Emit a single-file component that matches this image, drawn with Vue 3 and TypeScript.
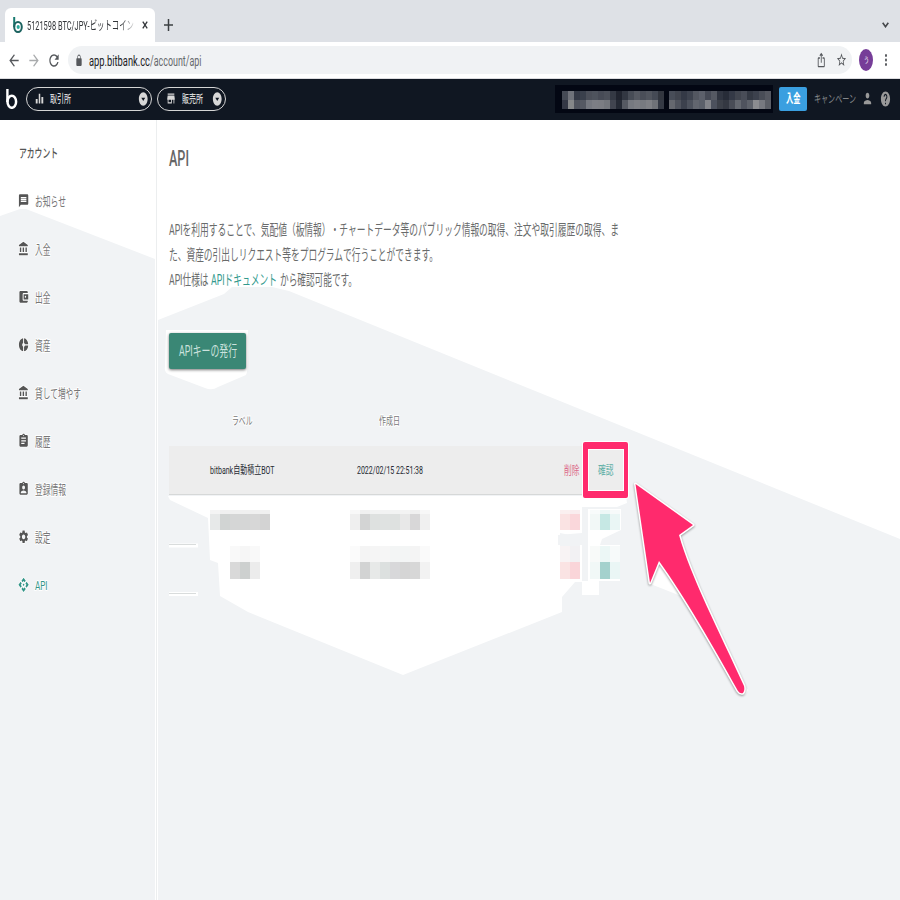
<script setup lang="ts">
import { h, type FunctionalComponent } from 'vue'

// Text squeezed horizontally to an exact width; vertically centred in its box.
const SQUEEZE = 0.62
const Fit: FunctionalComponent<{ t: string; w: number; s: number }> = (p) =>
  h('svg', { class: 'fit', width: p.w, height: p.s * 1.2 }, [
    h('text', { x: 0, y: p.s * 0.98, 'font-size': p.s, transform: `scale(${SQUEEZE} 1)`, textLength: p.w / SQUEEZE, lengthAdjust: 'spacingAndGlyphs' }, p.t),
  ])
Fit.props = ['t', 'w', 's']

// 24-unit glyph drawn narrower than it is tall.
const Ic: FunctionalComponent<{ d: string; w?: number; h?: number }> = (p) =>
  h('svg', { class: 'ic', width: p.w ?? 11.2, height: p.h ?? 15.6, viewBox: '0 0 24 24', preserveAspectRatio: 'none' }, [
    h('path', { d: p.d }),
  ])
Ic.props = ['d', 'w', 'h']

interface Cell { x: number; y: number; w: number; h: number; c: string }
const Mosaic: FunctionalComponent<{ cells: Cell[]; w: number; h: number }> = (p) =>
  h('svg', { class: 'ic', width: p.w, height: p.h, 'shape-rendering': 'crispEdges' },
    p.cells.map((c) => h('rect', { x: c.x, y: c.y, width: c.w, height: c.h, fill: c.c })))
Mosaic.props = ['cells', 'w', 'h']

const strip = (colors: string[], y: number, height: number, x = 0, w = 10): Cell[] =>
  colors.map((c, i) => ({ x: x + i * w, y, w, h: height, c }))

const bank = 'M4 10v7h3v-7H4zm6 0v7h3v-7h-3zM2 22h19v-3H2v3zm14-12v7h3v-7h-3zm-4.5-9L2 6v2h19V6l-9.5-5z'
const board = 'M19 3h-4.18C14.4 1.84 13.3 1 12 1c-1.3 0-2.4.84-2.82 2H5c-1.1 0-2 .9-2 2v14c0 1.1.9 2 2 2h14c1.1 0 2-.9 2-2V5c0-1.1-.9-2-2-2zm-7 0c.55 0 1 .45 1 1s-.45 1-1 1-1-.45-1-1 .45-1 1-1z'
const back = 'M20 11H7.83l5.59-5.59L12 4l-8 8 8 8 1.41-1.41L7.83 13H20v-2z'
const forward = 'M4 11h12.17l-5.59-5.59L12 4l8 8-8 8-1.41-1.41L16.17 13H4v-2z'
const reload = 'M17.65 6.35C16.2 4.9 14.21 4 12 4c-4.42 0-7.99 3.58-7.99 8s3.57 8 7.99 8c3.73 0 6.84-2.55 7.73-6h-2.08c-.82 2.33-3.04 4-5.65 4-3.31 0-6-2.69-6-6s2.69-6 6-6c1.66 0 3.14.69 4.22 1.78L13 11h7V4l-2.35 2.35z'
const lock = 'M18 8h-1V6c0-2.76-2.24-5-5-5S7 3.24 7 6v2H6c-1.1 0-2 .9-2 2v10c0 1.1.9 2 2 2h12c1.1 0 2-.9 2-2V10c0-1.1-.9-2-2-2zm-2.9 0H8.9V6c0-1.71 1.39-3.1 3.1-3.1 1.71 0 3.1 1.39 3.1 3.1v2z'
const share = 'M16 5l-1.42 1.42-1.59-1.59V16h-1.98V4.83L9.42 6.42 8 5l4-4 4 4zm4 5v11c0 1.1-.9 2-2 2H6c-1.11 0-2-.9-2-2V10c0-1.11.89-2 2-2h3v2H6v11h12V10h-3V8h3c1.1 0 2 .89 2 2z'
const star = 'M22 9.24l-7.19-.62L12 2 9.19 8.63 2 9.24l5.46 4.73L5.82 21 12 17.27 18.18 21l-1.63-7.03L22 9.24zM12 15.4l-3.76 2.27 1-4.28-3.32-2.88 4.38-.38L12 6.1l1.71 4.04 4.38.38-3.32 2.88 1 4.28L12 15.4z'
const dots = 'M12 8c1.1 0 2-.9 2-2s-.9-2-2-2-2 .9-2 2 .9 2 2 2zm0 2c-1.1 0-2 .9-2 2s.9 2 2 2 2-.9 2-2-.9-2-2-2zm0 6c-1.1 0-2 .9-2 2s.9 2 2 2 2-.9 2-2-.9-2-2-2z'
const bars = 'M2 13h5v8H2zM10 3h4v18h-4zM17 9h5v12h-5z'
const store = 'M20 4H4v2h16V4zm1 10v-2l-1-5H4l-1 5v2h1v6h10v-6h4v6h2v-6h1zm-9 4H6v-4h6v4z'
const drop = 'M12 2C6.48 2 2 6.48 2 12s4.48 10 10 10 10-4.48 10-10S17.52 2 12 2zm0 13l-4.5-5h9z'
const person = 'M12 12c2.21 0 4-1.79 4-4s-1.79-4-4-4-4 1.79-4 4 1.79 4 4 4zm0 2c-2.67 0-8 1.34-8 4v2h16v-2c0-2.66-5.33-4-8-4z'
const help = 'M12 2C6.48 2 2 6.48 2 12s4.48 10 10 10 10-4.48 10-10S17.52 2 12 2zm1 17h-2v-2h2v2zm2.07-7.75l-.9.92C13.45 12.9 13 13.5 13 15h-2v-.5c0-1.1.45-2.1 1.17-2.83l1.24-1.26c.37-.36.59-.86.59-1.41 0-1.1-.9-2-2-2s-2 .9-2 2H8c0-2.21 1.79-4 4-4s4 1.79 4 4c0 .88-.36 1.68-.93 2.25z'

const nav: { t: string; w: number; d: string; on?: boolean }[] = [
  { t: 'お知らせ', w: 31, d: 'M20 2H4c-1.1 0-1.99.9-1.99 2L2 22l4-4h14c1.1 0 2-.9 2-2V4c0-1.1-.9-2-2-2zm-2 12H6v-2h12v2zm0-3H6V9h12v2zm0-3H6V6h12v2z' },
  { t: '入金', w: 15.5, d: bank },
  { t: '出金', w: 15.5, d: 'M21 18v1c0 1.1-.9 2-2 2H5c-1.11 0-2-.9-2-2V5c0-1.1.89-2 2-2h14c1.1 0 2 .9 2 2v1h-9c-1.11 0-2 .9-2 2v8c0 1.1.89 2 2 2h9zm-9-2h10V8H12v8zm4-2.5c-.83 0-1.5-.67-1.5-1.5s.67-1.5 1.5-1.5 1.5.67 1.5 1.5-.67 1.5-1.5 1.5z' },
  { t: '資産', w: 15.5, d: 'M11 9.16V2c-5 .5-9 4.79-9 10s4 9.5 9 10v-7.16c-1-.41-2-1.52-2-2.84s1-2.43 2-2.84zM14.86 11H22c-.48-4.75-4-8.53-9-9v7.16c1 .3 1.52.98 1.86 1.84zM13 14.84V22c5-.47 8.52-4.25 9-9h-7.14c-.34.86-.86 1.54-1.86 1.84z' },
  { t: '貸して増やす', w: 46, d: bank },
  { t: '履歴', w: 15.5, d: board + 'm2 14H7v-2h7v2zm3-4H7v-2h10v2zm0-4H7V7h10v2z' },
  { t: '登録情報', w: 31, d: board + 'm0 4c1.66 0 3 1.34 3 3s-1.34 3-3 3-3-1.34-3-3 1.34-3 3-3zm6 12H6v-1.4c0-2 4-3.1 6-3.1s6 1.1 6 3.1V19z' },
  { t: '設定', w: 15.5, d: 'M19.14 12.94c.04-.3.06-.61.06-.94 0-.32-.02-.64-.07-.94l2.03-1.58c.18-.14.23-.41.12-.61l-1.92-3.32c-.12-.22-.37-.29-.59-.22l-2.39.96c-.5-.38-1.03-.7-1.62-.94l-.36-2.54c-.04-.24-.24-.41-.48-.41h-3.84c-.24 0-.43.17-.47.41l-.36 2.54c-.59.24-1.13.57-1.62.94l-2.39-.96c-.22-.08-.47 0-.59.22L2.74 8.87c-.12.21-.08.47.12.61l2.03 1.58c-.05.3-.09.63-.09.94s.02.64.07.94l-2.03 1.58c-.18.14-.23.41-.12.61l1.92 3.32c.12.22.37.29.59.22l2.39-.96c.5.38 1.03.7 1.62.94l.36 2.54c.05.24.24.41.48.41h3.84c.24 0 .44-.17.47-.41l.36-2.54c.59-.24 1.13-.56 1.62-.94l2.39.96c.22.08.47 0 .59-.22l1.92-3.32c.12-.22.07-.47-.12-.61l-2.01-1.58zM12 15.6c-1.98 0-3.6-1.62-3.6-3.6s1.62-3.6 3.6-3.6 3.6 1.62 3.6 3.6-1.62 3.6-3.6 3.6z' },
  { t: 'API', w: 12.5, on: true, d: 'M14 12l-2 2-2-2 2-2 2 2zm-2-6l2.12 2.12 2.5-2.5L12 1 7.38 5.62l2.5 2.5L12 6zm-6 6l2.12-2.12-2.5-2.5L1 12l4.62 4.62 2.5-2.5L6 12zm12 0l-2.12 2.12 2.5 2.5L23 12l-4.62-4.62-2.5 2.5L18 12zm-6 6l-2.12-2.12-2.5 2.5L12 23l4.62-4.62-2.5-2.5L12 18z' },
]

const balance: Cell[] = [
  ...strip(['#454a55', '#6f727a', '#343946', '#3a404c', '#4b4f59', '#4e535d', '#474b56', '#4c505a', '#343944', '#20242f', '#323742', '#474c56', '#555962', '#4a4e58', '#51555e', '#454a55', '#32363f'], 6, 10, 7, 6),
  ...strip(['#343845', '#858789', '#50545e', '#555963', '#757880', '#7c7e85', '#7b7d83', '#74777d', '#414550', '#252a35', '#555962', '#767980', '#7c7e84', '#777a80', '#7e8085', '#6f7278', '#343944'], 15, 9, 7, 6),
  ...strip(['#484d58', '#41454f', '#343946', '#3e434f', '#535761', '#5c606b', '#464a56', '#555963', '#303541', '#272c38', '#343946', '#41454f', '#494d58', '#343944', '#3c414d', '#494d57', '#555861'], 6, 10, 114, 6),
  ...strip(['#65686f', '#4f535d', '#3c414d', '#4d525d', '#62666f', '#5b606a', '#82848a', '#4c515d', '#3c4049', '#343842', '#494d57', '#646870', '#4f535e', '#5e626b', '#8b8c90', '#777980', '#5c5f67'], 15, 9, 114, 6),
]
const label1: Cell[] = [...strip(['#f4f4f4', '#f0f0f0', '#f0f0f0', '#f0f0f0', '#f0f0f0', '#f0f0f0'], 0, 4), ...strip(['#e7e9e9', '#d1d4d3', '#d5d6d6', '#d5d6d6', '#d7d7d7', '#d3d3d3'], 4, 16)]
const date1: Cell[] = [...strip(['#f8f8f8', '#f0f0f0', '#f2f3f3', '#f2f3f3', '#f2f3f3', '#f3f3f3', '#f0f0f0', '#f7f7f7'], 0, 4), ...strip(['#efefef', '#d3d4d4', '#dee1e0', '#dfe2e1', '#dee1e0', '#e8e8e8', '#d8d7d8', '#f0f0f0'], 4, 16)]
const label2: Cell[] = [...strip(['#f9f9f9', '#f6f6f6', '#f9f9f9'], 0, 16), ...strip(['#d9d9d9', '#cdd0cf', '#ececec'], 16, 17)]
const date2: Cell[] = [...strip(['#fbfbfb', '#f4f4f4', '#f5f5f5', '#f6f6f6', '#f3f5f5', '#f3f5f5', '#f4f4f4', '#fafafa'], 0, 16), ...strip(['#efefef', '#d2d3d3', '#e7e9e8', '#dce0df', '#d8d8da', '#d5d5d5', '#d7d7d7', '#f2f2f2'], 16, 17)]
const del1: Cell[] = [...strip(['#faf0f0', '#f9edef'], 0, 4), ...strip(['#fae3e3', '#fad7db'], 4, 16)]
const del2: Cell[] = [...strip(['#f8f3f4', '#f2f1f3'], 0, 16), ...strip(['#fae3e3', '#fad5d9'], 16, 17)]
const ok1: Cell[] = [...strip(['#f8fbfb', '#edf7f6', '#f7fafa'], 0, 4), ...strip(['#f2f8f7', '#c6e8e4', '#eaf6f5'], 4, 16)]
const ok2: Cell[] = [...strip(['#f8faf9', '#ecf7f6', '#f7fafa'], 0, 16), ...strip(['#f1f8f7', '#a4d1cd', '#eaf6f5'], 16, 17)]
</script>

<template>
  <div class="page">
    <div class="tabs">
      <div class="tab">
        <svg class="ic" width="10" height="16" viewBox="0 0 10 16">
          <path d="M1.2 0v10" stroke="#187a70" stroke-width="2" fill="none" />
          <ellipse cx="5" cy="10" rx="3.8" ry="5" fill="none" stroke="#1c6360" stroke-width="2" />
          <ellipse cx="5.2" cy="10" rx="1.6" ry="2" fill="#27a899" />
        </svg>
        <Fit class="title" t="5121598 BTC/JPY-ビットコイン" :w="107" :s="12.5" />
        <svg class="ic" width="6" height="8" viewBox="0 0 6 8"><path d="M.8.6l4.4 6.8M5.2.6L.8 7.4" stroke="#33363a" stroke-width="1.3" /></svg>
      </div>
      <svg class="ic plus" width="9" height="12" viewBox="0 0 9 12"><path d="M4.5 0v12M0 6h9" stroke="#3c4043" stroke-width="1.5" /></svg>
      <svg class="ic chev" width="7" height="6" viewBox="0 0 7 6"><path d="M.7.7l2.8 4 2.8-4" fill="none" stroke="#45484c" stroke-width="1.6" /></svg>
    </div>

    <div class="toolbar">
      <Ic :d="back" :w="14" :h="19" />
      <Ic class="dim" :d="forward" :w="14" :h="19" />
      <Ic :d="reload" :w="14" :h="19" />
      <div class="url">
        <Ic :d="lock" :w="8" :h="13" />
        <div class="addr"><Fit class="host" t="app.bitbank.cc" :w="61" :s="14" /><Fit class="path" t="/account/api" :w="51.5" :s="14" /></div>
        <Ic :d="share" :w="10.5" :h="16" />
        <Ic :d="star" :w="11" :h="16" />
      </div>
      <div class="avatar"><Fit t="う" :w="5" :s="8" /></div>
      <Ic class="menu" :d="dots" :w="12" :h="18" />
    </div>

    <header class="bar">
      <svg class="ic" width="12" height="20" viewBox="0 0 12 20">
        <path d="M1.4 0v13" stroke="#fff" stroke-width="2.4" fill="none" />
        <ellipse cx="5.8" cy="12.8" rx="4.3" ry="6" fill="none" stroke="#fff" stroke-width="2.5" />
      </svg>
      <div class="pill wide">
        <Ic :d="bars" :w="9" :h="13" /><Fit class="pt" t="取引所" :w="21" :s="11" /><Ic class="arrow" :d="drop" :w="10.5" :h="16" />
      </div>
      <div class="pill">
        <Ic :d="store" :w="10" :h="15" /><Fit class="pt" t="販売所" :w="21" :s="11" /><Ic class="arrow" :d="drop" :w="10.5" :h="16" />
      </div>
      <div class="balance"><Mosaic :cells="balance" :w="218" :h="28" /></div>
      <div class="deposit"><Fit t="入金" :w="14.5" :s="12" /></div>
      <Fit class="camp" t="キャンペーン" :w="42" :s="11" />
      <Ic class="user" :d="person" :w="11" :h="17" />
      <Ic class="help" :d="help" :w="11" :h="18" />
    </header>

    <div class="body">
      <svg class="backdrop" width="900" height="780" viewBox="0 120 900 780">
        <path fill="#f1f3f5" d="M0 216L20 209h6L155 259V900H0z" />
        <path fill="#f1f3f5" d="M158 320L224 294 232 287H272L289 291 560 401 900 539V900H158z" />
        <path fill="#fff" d="M165 366Q164 372 168 374L205 388Q212 391 218 387L246 375Q249 370 248 330H166z" />
        <path fill="#fff" d="M168 496H626L627 503 617 507H582V533L558 535V545H582V582H575L562 597V612L403 675 248 612 220 596 218 563 210 560 208 518 170 500z" />
        <path fill="#fff" d="M588 509H621V530L602 539 600 545H620V581H599V595H582V581H588V545L588 532z" />
        <path fill="#f1f3f5" d="M582 509H588V580H582zM560 533L580 537V546H560z" />
        <path fill="#fff" d="M648 583L660 562 742 694 Q745 698 748 690L686 598z" />
        <path d="M169 545.5H198M169 594H198" stroke="#fff" stroke-width="4" /><path d="M169 544.5H196M169 593.5H196" stroke="#d9dcdc" />
      </svg>

      <aside class="side">
        <div class="head"><Fit t="アカウント" :w="39" :s="12.5" /></div>
        <div v-for="(n, i) in nav" :key="i" class="item" :class="{ on: n.on }">
          <Ic :d="n.d" /><Fit :t="n.t" :w="n.w" :s="13" />
        </div>
      </aside>

      <main class="main">
        <h1 class="h1"><Fit t="API" :w="20" :s="22" /></h1>
        <div class="para">
          <div class="line"><Fit t="APIを利用することで、気配値（板情報）・チャートデータ等のパブリック情報の取得、注文や取引履歴の取得、ま" :w="450" :s="14.5" /></div>
          <div class="line"><Fit t="た、資産の引出しリクエスト等をプログラムで行うことができます。" :w="269" :s="14.5" /></div>
          <div class="line"><Fit t="API仕様は" :w="39.5" :s="14.5" /><Fit class="link" t="APIドキュメント" :w="66" :s="14.5" /><Fit t="から確認可能です。" :w="77" :s="14.5" /></div>
        </div>
        <button class="issue"><Fit t="APIキーの発行" :w="58" :s="14.5" /></button>

        <div class="table">
          <div class="tr th">
            <div class="c1"><Fit t="ラベル" :w="20.5" :s="11" /></div>
            <div class="c2"><Fit t="作成日" :w="21" :s="11" /></div>
          </div>
          <div class="tr hit">
            <div class="c1"><Fit t="bitbank自動積立BOT" :w="64.5" :s="11.5" /></div>
            <div class="c2"><Fit t="2022/02/15 22:51:38" :w="66" :s="11.5" /></div>
            <div class="c3"><Fit class="red" t="削除" :w="15.5" :s="12.5" /></div>
            <div class="c4"><Fit class="green" t="確認" :w="15.5" :s="12.5" /></div>
          </div>
          <div class="tr m1">
            <div class="c1 shift"><Mosaic :cells="label1" :w="60" :h="20" /></div>
            <div class="c2"><Mosaic :cells="date1" :w="80" :h="20" /></div>
            <div class="c3"><Mosaic :cells="del1" :w="20" :h="20" /></div>
            <div class="c4"><Mosaic :cells="ok1" :w="30" :h="20" /></div>
          </div>
          <div class="tr m2">
            <div class="c1 nudge"><Mosaic :cells="label2" :w="30" :h="33" /></div>
            <div class="c2"><Mosaic :cells="date2" :w="80" :h="33" /></div>
            <div class="c3"><Mosaic :cells="del2" :w="20" :h="33" /></div>
            <div class="c4"><Mosaic :cells="ok2" :w="30" :h="33" /></div>
          </div>
        </div>
      </main>

      <svg class="marker" width="180" height="270" viewBox="575 435 180 270">
        <path fill="#ff2a6d" fill-rule="evenodd" stroke="#fff" stroke-width="2" paint-order="stroke" d="M585 442H626Q628 442 628 444V496Q628 498 626 498H585Q583 498 583 496V444Q583 442 585 442zM588 449V491H624V449z" />
        <path class="pointer" fill="#ff2a6d" stroke="#fff" stroke-width="3" stroke-linejoin="round" paint-order="stroke" d="M635.5 484L693 525 679 535C690 575 720 633 744 686Q745 691 743 693Q740 694 738 691C713 646 683 594 659 561L650 583z" />
      </svg>
    </div>
  </div>
</template>

<style>
body { margin: 0; background: #fff; }
.fit { display: block; overflow: visible; flex: none; }
.fit text { fill: currentColor; text-spacing-trim: space-all; }
.ic { display: block; flex: none; fill: currentColor; }
</style>

<style scoped>
.page { width: 900px; height: 900px; overflow: hidden; font-family: Roboto, "Noto Sans CJK JP", sans-serif; color: #666; background: #fff; }
.tabs { display: flex; height: 42px; background: #dee1e6; align-items: flex-end; box-sizing: border-box; }
.tab { display: flex; align-items: center; width: 150px; height: 34px; margin-left: 5px; padding: 0 7px 0 8px; box-sizing: border-box; background: #fff; border-radius: 6px 6px 0 0; color: #33363a; }
.title { margin-left: 4px; margin-right: 8px; mask-image: linear-gradient(90deg, #000 88%, transparent 102%); }
.plus { margin: 0 0 11px 9px; }
.chev { margin: 0 11px 14px auto; }
.toolbar { display: flex; align-items: center; height: 37px; box-sizing: border-box; border-bottom: 1px solid #dcdcdf; padding-left: 7px; color: #55585c; gap: 6px; }
.dim { color: #a9abad; }
.url { display: flex; align-items: center; width: 784px; height: 28px; margin-left: 1px; padding: 0 5px 0 7px; box-sizing: border-box; border-radius: 14px; background: #f0f2f4; gap: 9.5px; }
.addr { display: flex; flex: 1; margin-left: -4px; }
.host { color: #202124; }
.path { color: #65686c; }
.avatar { display: flex; align-items: center; justify-content: center; width: 14px; height: 22px; border-radius: 50%; background: #763d98; color: #fff; margin-left: 1px; }
.menu { margin-left: 1px; }
.bar { display: flex; align-items: center; height: 41px; background: #101722; padding: 0 0 2px 6px; box-sizing: border-box; color: #d7d7d7; }
.pill { display: flex; align-items: center; width: 69px; height: 24px; box-sizing: border-box; border: 1px solid #d5d5d5; border-radius: 12px; padding: 0 3px 0 8px; margin-left: 5px; }
.pill.wide { width: 126px; margin-left: 8px; }
.pt { margin-left: 5.5px; font-weight: 500; }
.arrow { margin-left: auto; }
.balance { width: 218px; height: 28px; margin-left: 329px; background: #030713; }
.deposit { display: flex; align-items: center; justify-content: center; width: 28px; height: 24px; margin-left: 6px; background: #3a9fe0; border-radius: 2px; color: #fff; font-weight: 700; }
.camp { margin-left: 6.5px; color: #85888b; }
.user { margin-left: 6px; color: #999; }
.help { margin-left: 7px; color: #999; }
.body { position: relative; display: flex; height: 780px; }
.backdrop { position: absolute; left: 0; top: 0; }
.side { position: relative; width: 157px; box-sizing: border-box; border-right: 1px solid #eceeef; }
.head { display: flex; align-items: center; height: 32px; padding: 17px 0 8px 19px; color: #555; font-weight: 500; }
.item { display: flex; align-items: center; height: 48px; padding-left: 18px; gap: 6px; color: #555; }
.item .fit { color: #777; }
.item.on, .item.on .fit { color: #329587; }
.item :deep(svg) { stroke: #fff; stroke-width: 2px; paint-order: stroke; overflow: visible; }
.main { position: relative; width: 743px; padding-left: 12px; box-sizing: border-box; }
.h1 { display: flex; align-items: center; height: 30px; margin: 22px 0 45px; color: #666; font-weight: 500; }
.para { color: #696b6b; }
.line { display: flex; align-items: center; height: 25px; gap: 2.5px; }
.link { color: #31998d; }
.issue { display: flex; align-items: center; justify-content: center; width: 77px; height: 36px; margin: 41px 0 34px; padding: 0; border: 0; border-radius: 2px; background: #3a8775; color: #cce2dd; font: inherit; box-shadow: 0 1px 3px #0008; }
.table { width: 459px; }
.tr { display: grid; grid-template-columns: 146px 149px 91px 27px 1fr; align-items: center; }
.tr > div { display: flex; justify-content: center; }
.tr .c2 { grid-column: 2; }
.tr .c3 { grid-column: 3 / 5; justify-content: flex-end; }
.tr .c4 { grid-column: 5; justify-content: center; }
.tr .c3 { padding-right: 2px; }
.th { height: 43px; box-sizing: border-box; padding-bottom: 7px; color: #777; }
.th :deep(svg) { stroke: #fff; stroke-width: 2px; paint-order: stroke; }
.hit { height: 49px; box-sizing: border-box; background: #ededed; border-bottom: 1px solid #d6d8d8; color: #262a33; }
.hit .c3 { padding-right: 3px; }
.hit .c4 { padding-left: 2px; }
.shift { padding-right: 4px; }
.nudge { padding-left: 6px; }
.red { color: #dc6a89; }
.green { color: #5fafa6; }
.m1 { height: 20px; margin-top: 15px; }
.m2 { height: 33px; margin-top: 16px; }
.marker { position: absolute; left: 575px; top: 315px; }
.pointer { filter: drop-shadow(0 1px 1px #0006); }
</style>
